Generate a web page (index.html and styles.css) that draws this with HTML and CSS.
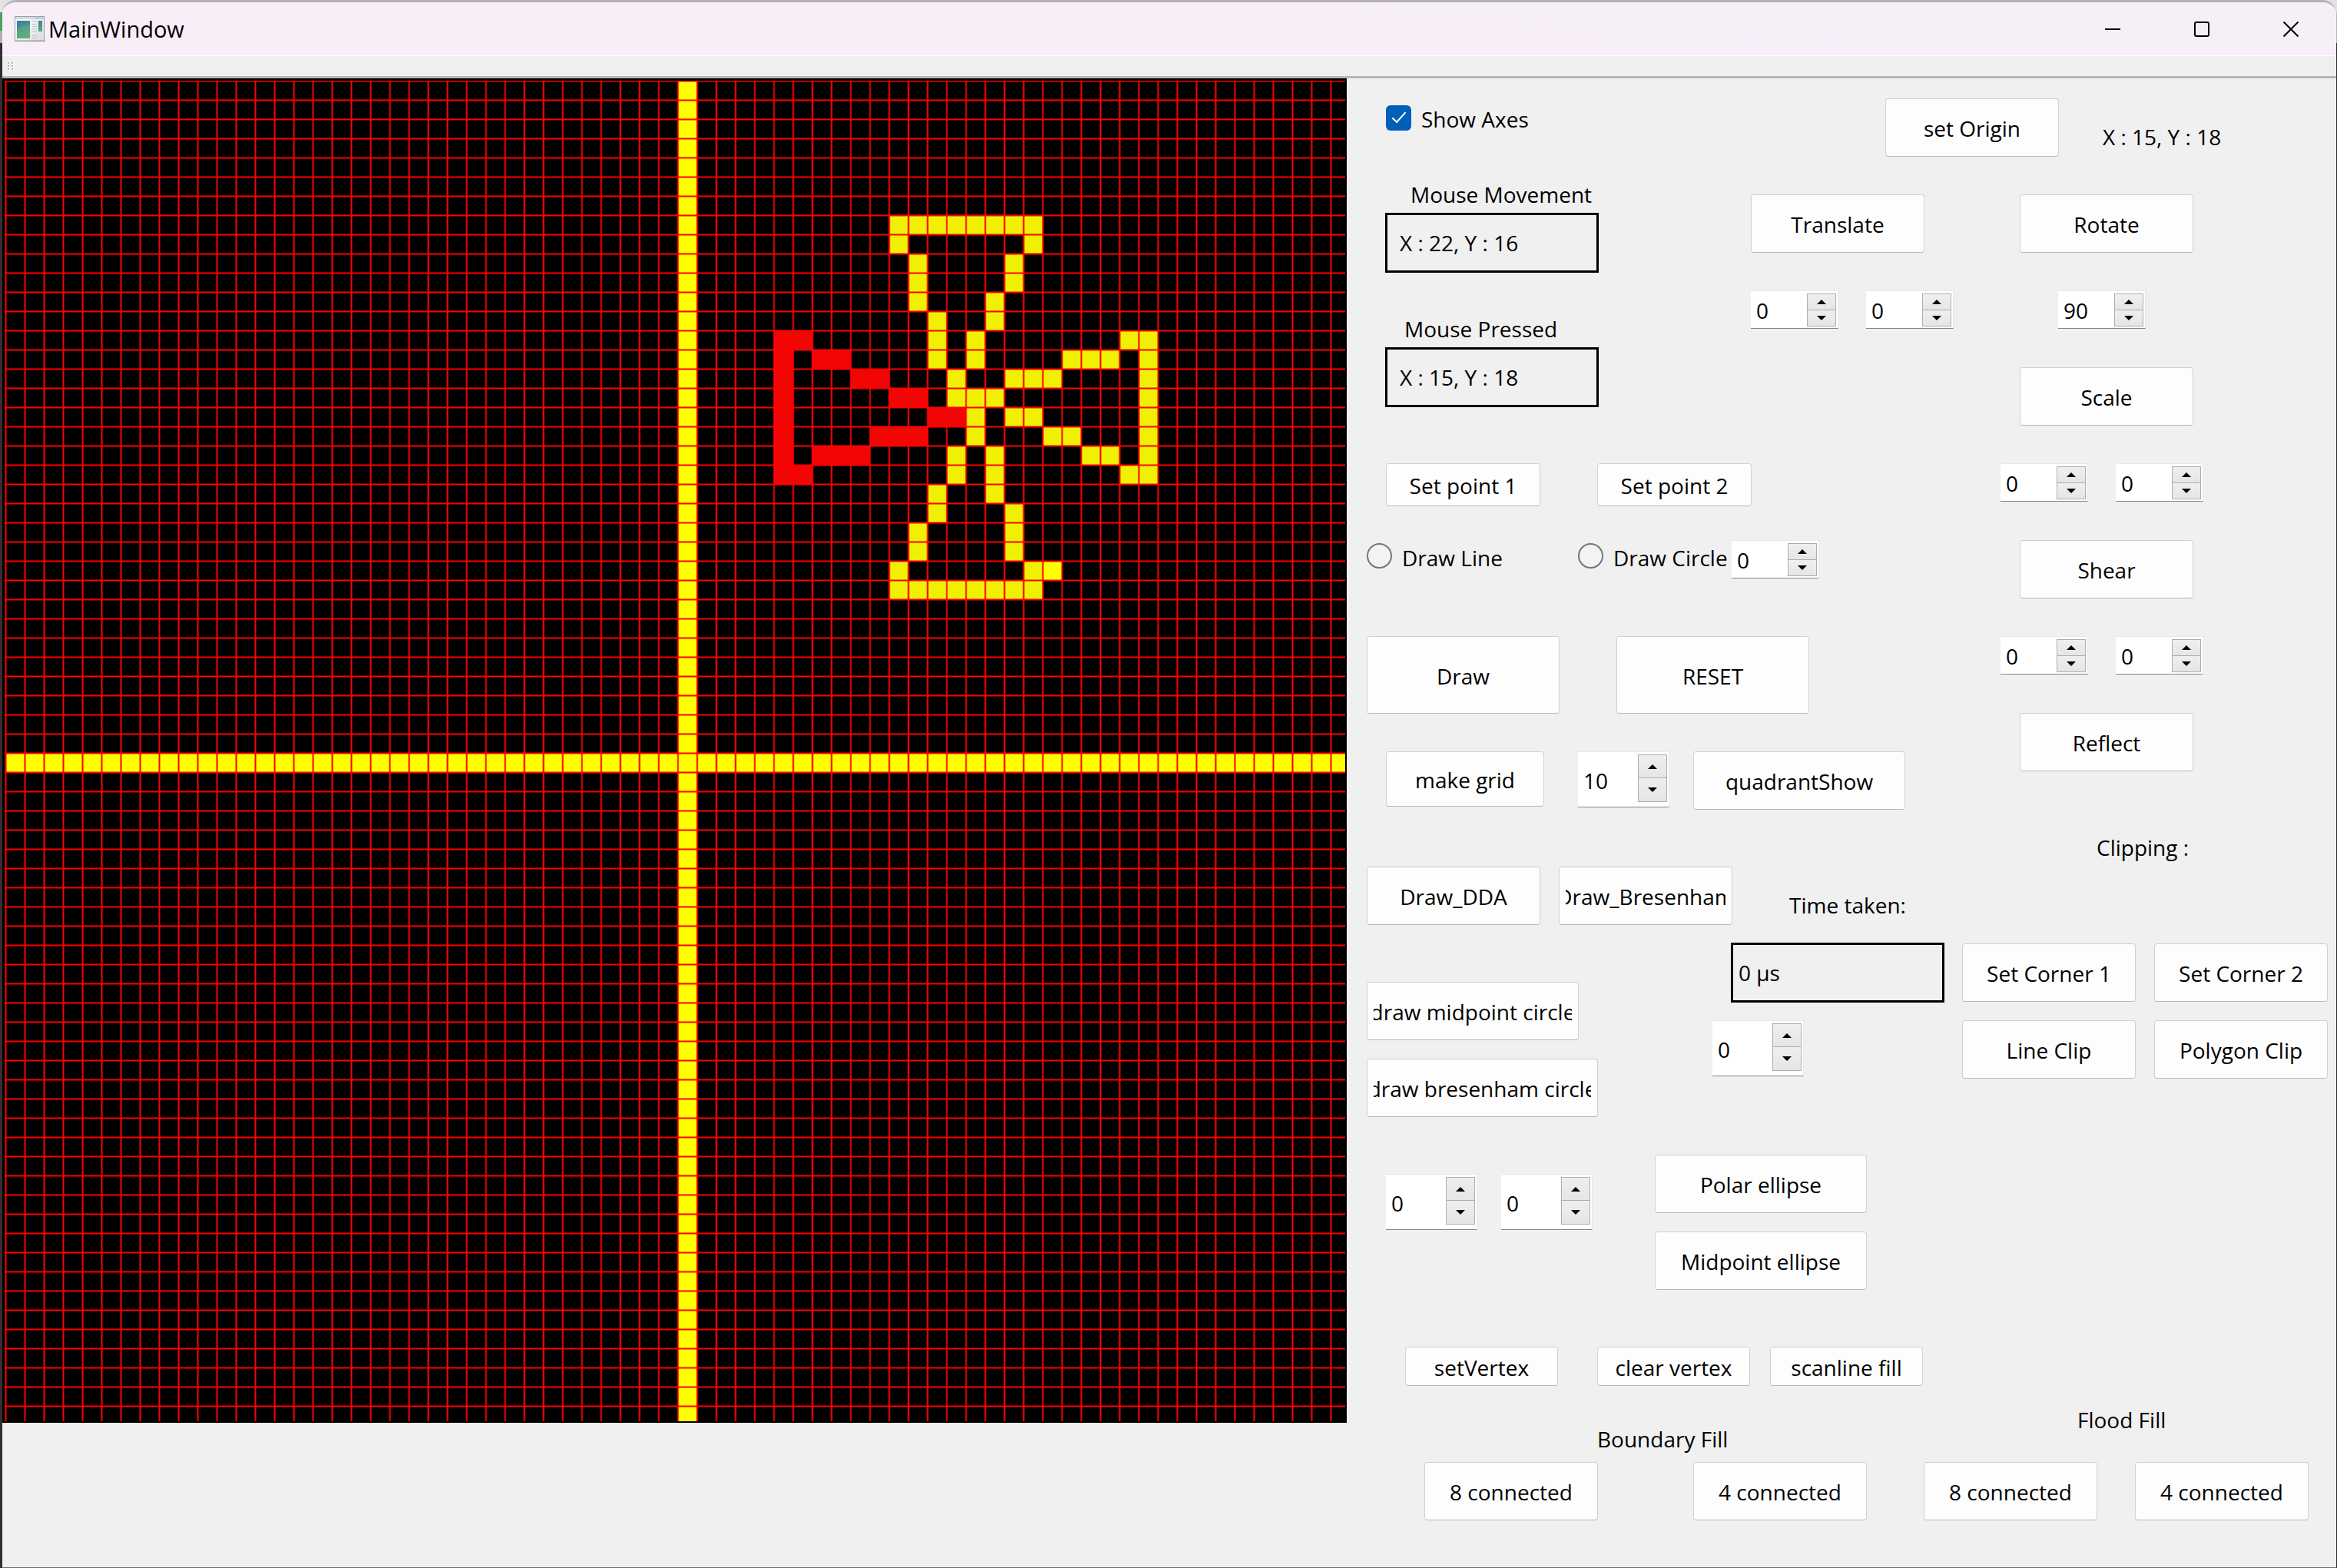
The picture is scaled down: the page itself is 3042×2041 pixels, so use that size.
FILE: index.html
```html
<!DOCTYPE html>
<html lang="en">
<head>
<meta charset="utf-8">
<title>MainWindow</title>
<link rel="stylesheet" href="styles.css">
</head>
<body>
<div class="window">
  <header class="titlebar">
    <svg class="app-icon" viewBox="0 0 40 33" aria-hidden="true">
      <defs>
        <linearGradient id="pane" x1="0" y1="0" x2="0.4" y2="1">
          <stop offset="0" stop-color="#3f78a8"/>
          <stop offset="1" stop-color="#5aa878"/>
        </linearGradient>
        <linearGradient id="sheet" x1="0" y1="0" x2="1" y2="1">
          <stop offset="0" stop-color="#ffffff"/>
          <stop offset="1" stop-color="#d9dce0"/>
        </linearGradient>
      </defs>
      <rect x="0.5" y="0.5" width="38" height="31.5" fill="url(#sheet)" stroke="#9aa1ab"/>
      <rect x="1" y="1" width="37" height="3" fill="#d4dbe4"/>
      <path d="M27 2.5h3M31 2.5h3M35 2.5h2" stroke="#9aa1ab"/>
      <rect x="3" y="6" width="17" height="23" fill="url(#pane)"/>
      <path d="M3 17q7-6 17-6v18H3z" fill="#6cc07a" opacity="0.3"/>
      <path d="M23 6.5h6M23 10.5h6M23 13.500h6M23 16.500h6M23 19.500h6M23 25.500h6M23 28.500h6" stroke="#c3c6ca"/>
      <rect x="31" y="6" width="5" height="14" fill="url(#pane)"/>
      <path d="M0 32.500h40" stroke="#8f959d"/>
    </svg>
    <h1 class="title">MainWindow</h1>
    <button class="sys" aria-label="Minimize"><svg viewBox="0 0 20 20"><path d="M0 10h20"/></svg></button>
    <button class="sys" aria-label="Maximize"><svg viewBox="0 0 20 20"><rect x="1" y="1" width="18" height="18" rx="2"/></svg></button>
    <button class="sys" aria-label="Close"><svg viewBox="0 0 20 20"><path d="M0.500 0.500l19 19M19.500 0.500l-19 19"/></svg></button>
  </header>
  <div class="toolbar">
    <svg class="grip" viewBox="0 0 8 11" aria-hidden="true">
      <path d="M1 1h2v2H1zM6 1h2v2H6zM1 5h2v2H1zM6 5h2v2H6zM1 9h2v2H1zM6 9h2v2H6z" fill="#fff"/>
      <path d="M0 0h2v2H0zM5 0h2v2H5zM0 4h2v2H0zM5 4h2v2H5zM0 8h2v2H0zM5 8h2v2H5z" fill="#b4b4b4"/>
    </svg>
  </div>

  <main class="workspace">
    <svg class="plot" viewBox="0 0 1750 1750" role="img" aria-label="Plot grid">
      <defs>
        <clipPath id="frame"><rect x="3" y="3" width="1745" height="1745"/></clipPath>
      </defs>
      <rect width="1750" height="1750" fill="#000"/>
      <g clip-path="url(#frame)">
        <g transform="translate(4.500 3.500) scale(25)">
          <path fill="#ff0" d="M35 0h1v70h-1zM0 35h70v1H0zM54 25h1v1h-1z"/>
          <path fill="#f20505" d="M40 13h1v8h-1zM41 13h1v1h-1zM42 14h2v1h-2zM44 15h2v1h-2zM46 16h2v1h-2zM48 17h2v1h-2zM45 18h3v1h-3zM42 19h3v1h-3zM41 20h1v1h-1z"/>
          <path fill="#f0f005" d="M46 7h8v1h-8zM46 8h1v1h-1zM53 8h1v1h-1zM47 9h1v3h-1zM52 9h1v2h-1zM51 11h1v2h-1zM48 12h1v3h-1zM50 13h1v2h-1zM58 13h1v1h-1zM59 13h1v8h-1zM55 14h3v1h-3zM49 15h1v1h-1zM52 15h3v1h-3zM49 16h3v1h-3zM50 17h1v2h-1zM52 17h2v1h-2zM54 18h2v1h-2zM49 19h1v2h-1zM51 19h1v3h-1zM56 19h2v1h-2zM58 20h1v1h-1zM48 21h1v2h-1zM52 22h1v3h-1zM47 23h1v2h-1zM46 25h1v1h-1zM53 25h1v1h-1zM46 26h8v1h-8z"/>
        </g>
        <!-- grid lines: one wide dashed stroke per direction -->
        <g fill="none" stroke="#f00" stroke-width="1750" stroke-dasharray="2 23">
          <path d="M3.500 875H1750"/>
          <path d="M875 2.500V1750"/>
        </g>
      </g>
    </svg>

    <form class="panel" onsubmit="return false">
      <label class="choice at-axes"><input type="checkbox" checked><span>Show Axes</span></label>

      <div class="reading at-move">
        <label class="caption caption--move" for="move">Mouse Movement</label>
        <input class="field" id="move" value="X : 22, Y : 16" readonly>
      </div>
      <div class="reading at-press">
        <label class="caption caption--press" for="press">Mouse Pressed</label>
        <input class="field" id="press" value="X : 15, Y : 18" readonly>
      </div>

      <div class="row row--wide at-points">
        <button class="btn btn--point">Set point 1</button>
        <button class="btn btn--point">Set point 2</button>
      </div>

      <div class="row at-shapes">
        <label class="choice choice--line"><input type="radio" name="shape"><span>Draw Line</span></label>
        <label class="choice choice--circle"><input type="radio" name="shape"><span>Draw Circle</span></label>
        <span class="spin"><input type="number" value="0" aria-label="Radius"><button class="up" aria-label="Up"></button><button class="down" aria-label="Down"></button></span>
      </div>

      <div class="row row--wide at-draw">
        <button class="btn btn--big">Draw</button>
        <button class="btn btn--big">RESET</button>
      </div>

      <button class="btn btn--grid at-grid">make grid</button>
      <span class="spin spin--tall at-size"><input type="number" value="10" aria-label="Grid size"><button class="up" aria-label="Up"></button><button class="down" aria-label="Down"></button></span>
      <button class="btn btn--275 at-quadrant">quadrantShow</button>

      <div class="row row--near at-lines">
        <button class="btn">Draw_DDA</button>
        <button class="btn"><span class="clip">Draw_Bresenham</span></button>
      </div>

      <div class="stack at-circles">
        <button class="btn btn--275"><span class="clip">draw midpoint circle</span></button>
        <button class="btn btn--300"><span class="clip">draw bresenham circle</span></button>
      </div>

      <label class="caption at-time" for="time">Time taken:</label>
      <input class="field field--tight at-elapsed" id="time" value="0 µs" readonly>
      <span class="spin spin--tall at-repeat"><input type="number" value="0" aria-label="Circle radius"><button class="up" aria-label="Up"></button><button class="down" aria-label="Down"></button></span>

      <div class="pair at-radii">
        <span class="spin spin--tall"><input type="number" value="0" aria-label="Ellipse a"><button class="up" aria-label="Up"></button><button class="down" aria-label="Down"></button></span>
        <span class="spin spin--tall"><input type="number" value="0" aria-label="Ellipse b"><button class="up" aria-label="Up"></button><button class="down" aria-label="Down"></button></span>
      </div>
      <div class="stack at-ellipses">
        <button class="btn btn--275">Polar ellipse</button>
        <button class="btn btn--275">Midpoint ellipse</button>
      </div>

      <button class="btn btn--low at-set">setVertex</button>
      <button class="btn btn--low at-clear">clear vertex</button>
      <button class="btn btn--low at-scan">scanline fill</button>

      <span class="caption caption--low at-boundary">Boundary Fill</span>
      <button class="btn at-boundary8">8 connected</button>
      <button class="btn at-boundary4">4 connected</button>
      <span class="caption caption--low at-flood">Flood Fill</span>
      <div class="row row--flood at-floods">
        <button class="btn">8 connected</button>
        <button class="btn">4 connected</button>
      </div>

      <button class="btn at-origin">set Origin</button>
      <output class="caption caption--origin at-position">X : 15, Y : 18</output>

      <div class="stack stack--wide at-translate">
        <button class="btn">Translate</button>
        <div class="pair">
          <span class="spin"><input type="number" value="0" aria-label="Translate x"><button class="up" aria-label="Up"></button><button class="down" aria-label="Down"></button></span>
          <span class="spin"><input type="number" value="0" aria-label="Translate y"><button class="up" aria-label="Up"></button><button class="down" aria-label="Down"></button></span>
        </div>
      </div>

      <div class="stack stack--wide transforms at-transforms">
        <button class="btn">Rotate</button>
        <span class="spin spin--angle"><input type="number" value="90" aria-label="Angle"><button class="up" aria-label="Up"></button><button class="down" aria-label="Down"></button></span>
        <button class="btn">Scale</button>
        <div class="pair pair--out">
          <span class="spin"><input type="number" value="0" aria-label="Scale x"><button class="up" aria-label="Up"></button><button class="down" aria-label="Down"></button></span>
          <span class="spin"><input type="number" value="0" aria-label="Scale y"><button class="up" aria-label="Up"></button><button class="down" aria-label="Down"></button></span>
        </div>
        <button class="btn">Shear</button>
        <div class="pair pair--out">
          <span class="spin"><input type="number" value="0" aria-label="Shear x"><button class="up" aria-label="Up"></button><button class="down" aria-label="Down"></button></span>
          <span class="spin"><input type="number" value="0" aria-label="Shear y"><button class="up" aria-label="Up"></button><button class="down" aria-label="Down"></button></span>
        </div>
        <button class="btn">Reflect</button>
      </div>

      <span class="caption at-clipping">Clipping :</span>
      <div class="clipping at-clips">
        <button class="btn">Set Corner 1</button>
        <button class="btn">Set Corner 2</button>
        <button class="btn">Line Clip</button>
        <button class="btn">Polygon Clip</button>
      </div>
    </form>
  </main>
</div>
</body>
</html>
```
FILE: styles.css
```css
* {
  box-sizing: border-box;
}

body {
  margin: 0;
  min-height: 100vh;
  display: flex;
  color: #000;
  font: 28px/40px "Open Sans", "Noto Sans", sans-serif;
  background:
    linear-gradient(#e5e5e5 16px, #4aa35c 16px 40px, #b0b0b0 40px 56px, #303030 56px) left / 3px 100% no-repeat,
    linear-gradient(#e0e0e0 16px, #b8b8b8 16px 56px, #303030 56px);
}

button,
input {
  margin: 0;
  font: inherit;
  color: inherit;
}

/* Window frame */

.window {
  flex: 1;
  min-width: 0;
  margin: 0 1px 0 3px;
  overflow: hidden;
  border-top: 3px solid #b3b3b3;
  border-bottom: 1px solid #666b70;
  border-radius: 18px 18px 0 0;
  background: #f0f0f0;
}

.titlebar {
  display: flex;
  align-items: center;
  height: 70px;
  padding: 0 1px 0 16px;
  border-bottom: 1px solid #fff;
  background: linear-gradient(90deg, #f9eef8, #f6eff8);
}

.app-icon {
  width: 40px;
  height: 33px;
}

.title {
  flex: 1;
  margin: 0;
  padding-left: 4px;
  font-size: 29px;
  font-weight: 400;
}

.sys {
  display: grid;
  place-items: center;
  width: 116px;
  height: 69px;
  padding: 0;
  border: 0;
  background: none;
}

.sys svg {
  width: 20px;
  height: 20px;
  overflow: visible;
  fill: none;
  stroke: #000;
  stroke-width: 2;
}

.toolbar {
  display: flex;
  align-items: center;
  height: 29px;
  padding-left: 7px;
  border-bottom: 3px solid #b7b7b7;
  background: #efefef;
}

.grip {
  width: 8px;
  height: 11px;
}

/* Plot and controls side by side */

.workspace {
  display: grid;
  grid-template-columns: minmax(0, 1750fr) minmax(0, 1288fr);
  align-items: start;
}

.plot {
  display: block;
  width: 100%;
  height: auto;
}

.panel {
  display: grid;
  grid-template-columns: repeat(51, minmax(0, 1fr));
  grid-auto-rows: 25px;
  align-items: start;
  justify-items: start;
  padding: 1px 12px 0 1px;
  white-space: nowrap;
}

.row,
.stack {
  display: flex;
  align-items: flex-start;
}

.stack {
  flex-direction: column;
  gap: 25px;
}

.row--near { gap: 25px; }
.row--flood { gap: 50px; }
.row--wide { gap: 75px; }
.stack--wide { gap: 50px; }

.pair {
  display: grid;
  grid-template-columns: repeat(2, 150px);
}

.pair--out {
  margin-left: -25px;
}

.clipping {
  display: grid;
  grid-template-columns: repeat(2, 225px);
  gap: 25px;
}

/* Push buttons */

.btn {
  width: 226px;
  height: 76px;
  margin: 0 -1px -1px 0;
  padding: 2px 8px 0;
  border: 1px solid #d0d0d0;
  border-bottom-color: #b8b8b8;
  border-radius: 4px;
  background: #fdfdfd;
  white-space: nowrap;
}

.btn--275 { width: 276px; }
.btn--300 { width: 301px; }

.btn--point {
  width: 201px;
  height: 56px;
}

.btn--big {
  width: 251px;
  height: 101px;
}

.btn--grid {
  width: 206px;
  height: 72px;
}

.btn--low {
  width: 199px;
  height: 51px;
}

.clip {
  display: flex;
  justify-content: center;
  overflow: hidden;
}

/* Captions and readouts */

.caption {
  height: 50px;
  line-height: 50px;
}

.caption--low {
  height: 40px;
  line-height: 40px;
}

.caption--move { padding-left: 32px; }
.caption--press { padding-left: 24px; }
.caption--origin { padding-left: 8px; }

.reading {
  display: flex;
  flex-direction: column;
}

.field {
  width: 278px;
  height: 78px;
  margin: -1px 0 0 -1px;
  padding: 0 16px;
  border: 3px solid #000;
  background: transparent;
}

.field--tight {
  padding: 0 7px;
}

/* Tick box and radios */

.choice {
  display: flex;
  align-items: center;
  gap: 13px;
  height: 41px;
}

.choice span {
  padding-top: 4px;
}

.choice input {
  appearance: none;
  width: 33px;
  height: 33px;
  border: 2px solid #767676;
  border-radius: 50%;
  background: #f3f3f3;
}

.choice input[type="checkbox"] {
  display: grid;
  place-items: center;
  border: 0;
  border-radius: 6px;
  background: #005fb8;
}

.choice input[type="checkbox"]::before {
  content: "";
  width: 16px;
  height: 7px;
  margin-top: -5px;
  border: solid #fff;
  border-width: 0 0 2px 2px;
  rotate: -48deg;
}

.choice--line { width: 275px; }
.choice--circle { width: 200px; }

/* Spin boxes */

.spin {
  display: grid;
  grid-template: 1fr 1fr / 1fr 38px;
  width: 114px;
  height: 50px;
  padding: 3px 2px 2px 0;
  border: solid #e8e8e8;
  border-width: 1px 1px 1px 0;
  border-bottom-color: #858585;
  background: #fff;
}

.spin--tall {
  width: 119px;
  height: 73px;
  padding-bottom: 6px;
}

.spin--angle {
  margin-left: 50px;
}

.spin input {
  grid-row: 1 / 3;
  width: 100%;
  min-width: 0;
  padding: 0 0 0 7px;
  border: 0;
  background: none;
  appearance: textfield;
}

.spin--tall input {
  padding-top: 6px;
}

.spin input::-webkit-inner-spin-button {
  appearance: none;
  margin: 0;
}

.spin button {
  display: grid;
  place-items: center;
  padding: 0;
  border: 1px solid #adadad;
  background: linear-gradient(#efefef, #e5e5e5);
}

.spin .down {
  border-top: 0;
}

.spin button::before {
  content: "";
  border: solid transparent;
  border-width: 0 6px;
}

.spin .up::before { border-bottom: 6px solid #000; }
.spin .down::before { border-top: 6px solid #000; }

/* Places on the form grid: row / column */

.at-axes { grid-area: 2 / 3 / span 2 / span 8; height: 50px; }
.at-move { grid-area: 6 / 3 / span 5 / span 12; }
.at-press { grid-area: 13 / 3 / span 5 / span 12; }
.at-points { grid-area: 21 / 3 / span 3 / span 20; }
.at-shapes { grid-area: 25 / 2 / span 2 / span 24; }
.at-draw { grid-area: 30 / 2 / span 4 / span 24; }
.at-grid { grid-area: 36 / 3 / span 3 / span 9; }
.at-size { grid-area: 36 / 13 / span 3 / span 5; }
.at-quadrant { grid-area: 36 / 19 / span 3 / span 11; }
.at-lines { grid-area: 42 / 2 / span 3 / span 19; }
.at-time { grid-area: 43 / 24 / span 2 / span 7; }
.at-elapsed { grid-area: 46 / 21 / span 3 / span 11; }
.at-circles { grid-area: 48 / 2 / span 7 / span 12; }
.at-repeat { grid-area: 50 / 20 / span 3 / span 5; }
.at-radii { grid-area: 58 / 3 / span 3 / span 12; }
.at-ellipses { grid-area: 57 / 17 / span 7 / span 11; }
.at-set { grid-area: 67 / 4 / span 2 / span 8; }
.at-clear { grid-area: 67 / 14 / span 2 / span 8; }
.at-scan { grid-area: 67 / 23 / span 2 / span 8; }
.at-boundary { grid-area: 71 / 14 / span 2 / span 8; }
.at-boundary8 { grid-area: 73 / 5 / span 3 / span 9; }
.at-boundary4 { grid-area: 73 / 19 / span 3 / span 9; }
.at-flood { grid-area: 70 / 39 / span 2 / span 6; }
.at-floods { grid-area: 73 / 31 / span 3 / span 20; }
.at-origin { grid-area: 2 / 29 / span 3 / span 9; }
.at-position { grid-area: 3 / 40 / span 2 / span 9; }
.at-translate { grid-area: 7 / 22 / span 7 / span 12; }
.at-transforms { grid-area: 7 / 36 / span 30 / span 12; }
.at-clipping { grid-area: 40 / 40 / span 2 / span 7; }
.at-clips { grid-area: 46 / 33 / span 7 / span 19; }
```
